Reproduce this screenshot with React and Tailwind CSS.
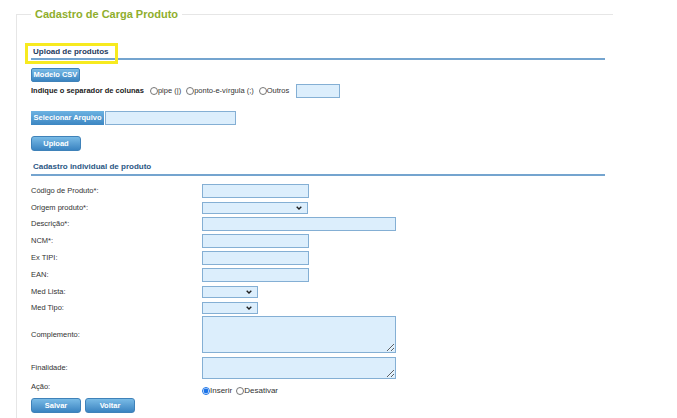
import React from "react";

const font = { fontFamily: '"Liberation Sans", Arial, sans-serif' };

const Btn = ({ children, className = "" }) => (
  <button
    className={`flex items-center justify-center border border-[#3f82b9] bg-linear-to-b from-[#79bbe6] to-[#3a84c1] text-[7.5px] font-bold leading-none text-white ${className}`}
  >
    {children}
  </button>
);

const TextInput = ({ w = "w-[107px]", h = "h-[14px]" }) => (
  <input
    type="text"
    className={`${w} ${h} border border-[#84afd4] bg-[#dceefc] outline-none`}
  />
);

const SelectBox = ({ w = "w-[106px]" }) => (
  <div className={`relative ${w} h-[12px] border border-[#84afd4] bg-[#dceefc]`}>
    <svg
      className="absolute right-[5px] top-[3px]"
      width="6"
      height="4"
      viewBox="0 0 6 4"
      fill="none"
    >
      <path d="M0.7 0.7 L3 3 L5.3 0.7" stroke="#1f1f1f" strokeWidth="1.4" />
    </svg>
  </div>
);

const Radio = ({ checked, label, className = "" }) => (
  <label className={`flex items-center ${className}`}>
    <input
      type="radio"
      defaultChecked={checked}
      className="h-[8px] w-[8px] accent-[#1a73e8]"
    />
    <span>{label}</span>
  </label>
);

const Row = ({ label, children, className = "" }) => (
  <div className={`flex items-center ${className}`}>
    <div className="w-[171px] text-[7.5px] leading-[10px] text-[#333]">{label}</div>
    {children}
  </div>
);

export default function App() {
  return (
    <div className="h-[418px] w-[677px] overflow-hidden bg-white pl-[16px] pt-[8px]" style={font}>
      <fieldset className="w-[597px] border-l border-t border-[#e6e6e6] pb-[20px] pl-[14px]">
        <legend className="px-[4px] text-[11px] font-bold leading-[13px] text-[#8fae2c]">
          Cadastro de Carga Produto
        </legend>

        {/* Upload de produtos */}
        <div className="relative mt-[26px] w-[574px] border-b-2 border-[#74a4cf] pb-[1px] pl-[2px] text-[8px] font-bold leading-[10px] text-[#1f3b5e]">
          Upload de produtos
          <div className="absolute left-[-6px] top-[-4px] h-[21px] w-[93px] border-[3px] border-[#f7ea1f]" />
        </div>

        <Btn className="mt-[8px] h-[14px] w-[49px] rounded-[2px]">Modelo CSV</Btn>

        <div className="mt-[2px] flex h-[14px] items-center text-[7.5px] text-[#333]">
          <span className="mr-[6px] font-bold text-[#222]">Indique o separador de colunas</span>
          <Radio label="pipe (|)" />
          <Radio label="ponto-e-vírgula (;)" className="ml-[5px]" />
          <Radio label="Outros" className="ml-[5px]" />
          <input
            type="text"
            className="ml-[7px] h-[14px] w-[44px] border border-[#84afd4] bg-[#dceefc] outline-none"
          />
        </div>

        <div className="mt-[13px] flex">
          <div className="flex h-[14px] w-[73px] items-center justify-center bg-linear-to-b from-[#6cb2e2] to-[#3c86c2] text-[7.5px] font-bold text-white">
            Selecionar Arquivo
          </div>
          <input
            type="text"
            className="ml-[1px] h-[14px] w-[131px] border border-[#84afd4] bg-[#dceefc] outline-none"
          />
        </div>

        <Btn className="mt-[11px] h-[15px] w-[50px] rounded-[3px]">Upload</Btn>

        {/* Cadastro individual */}
        <div className="mt-[11px] w-[574px] border-b-2 border-[#74a4cf] pb-[2px] pl-[2px] text-[8px] font-bold leading-[10px] text-[#2b5784]">
          Cadastro individual de produto
        </div>

        <Row label="Código de Produto*:" className="mt-[8px]">
          <TextInput />
        </Row>
        <Row label="Origem produto*:" className="mt-[4px]">
          <SelectBox />
        </Row>
        <Row label="Descrição*:" className="mt-[3px]">
          <TextInput w="w-[194px]" />
        </Row>
        <Row label="NCM*:" className="mt-[3px]">
          <TextInput />
        </Row>
        <Row label="Ex TIPI:" className="mt-[3px]">
          <TextInput />
        </Row>
        <Row label="EAN:" className="mt-[3px]">
          <TextInput />
        </Row>
        <Row label="Med Lista:" className="mt-[4px]">
          <SelectBox w="w-[56px]" />
        </Row>
        <Row label="Med Tipo:" className="mt-[4px]">
          <SelectBox w="w-[56px]" />
        </Row>
        <Row label="Complemento:" className="mt-[2px]">
          <textarea className="block h-[37px] w-[194px] border border-[#84afd4] bg-[#dceefc] outline-none" />
        </Row>
        <Row label="Finalidade:" className="mt-[4px]">
          <textarea className="block h-[22px] w-[194px] border border-[#84afd4] bg-[#dceefc] outline-none" />
        </Row>

        <div className="mt-[3px] flex items-start">
          <div className="w-[171px] text-[7.5px] leading-[10px] text-[#333]">Ação:</div>
          <div className="mt-[4px] flex h-[10px] items-center text-[8px] text-[#333]">
            <Radio checked label="Inserir" />
            <Radio label="Desativar" className="ml-[4px]" />
          </div>
        </div>

        <div className="mt-[2px] flex gap-[4px]">
          <Btn className="h-[15px] w-[50px] rounded-[3px]">Salvar</Btn>
          <Btn className="h-[15px] w-[50px] rounded-[3px]">Voltar</Btn>
        </div>
      </fieldset>
    </div>
  );
}
